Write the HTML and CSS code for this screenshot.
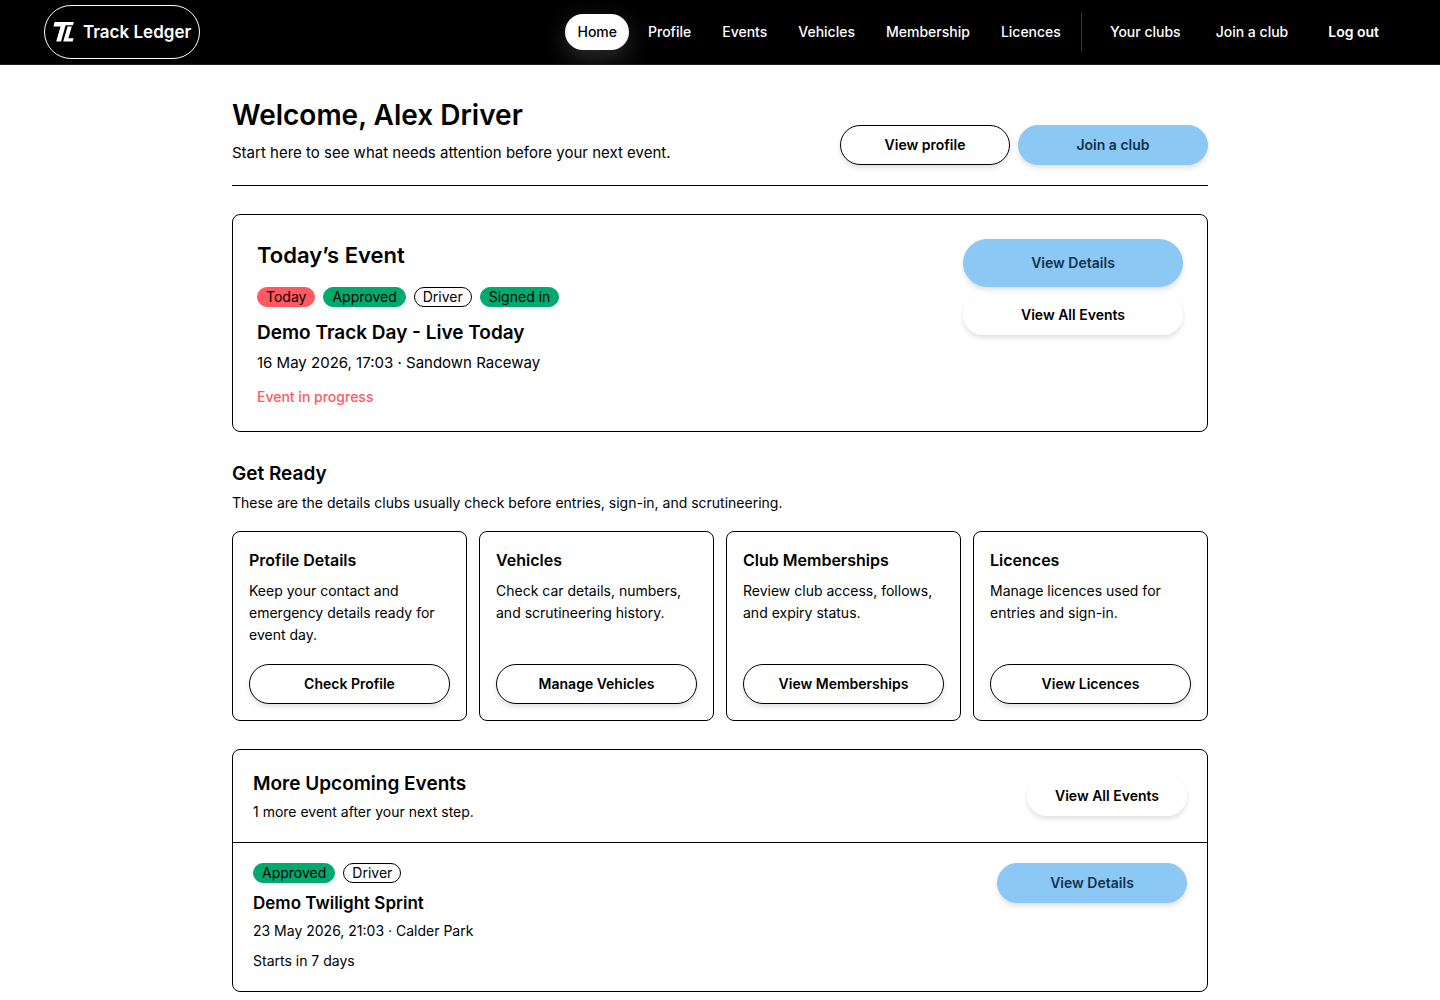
FILE: index.html
```html
<!DOCTYPE html>
<html lang="en">
<head>
<meta charset="utf-8">
<meta name="viewport" content="width=device-width, initial-scale=1">
<title>Track Ledger</title>
<link rel="stylesheet" href="styles.css">
</head>
<body>
<header class="topbar">
  <a class="brand" href="#">
    <svg class="brand-mark" viewBox="0 0 22 22" aria-hidden="true">
      <path d="M1.600 1H21l-1.200 3.200H12.600L8 20.600H3.200L7.600 5.400H.5z" fill="#fff"/>
      <path d="M14.600 5.600h4.200l-3.400 11.600h5.200l-1 3.400H10.200z" fill="#fff"/>
    </svg>
    <span>Track Ledger</span>
  </a>
  <nav class="nav" aria-label="Main">
    <div class="nav-main">
      <a class="nav-link nav-link-active" href="#" aria-current="page">Home</a>
      <a class="nav-link" href="#">Profile</a>
      <a class="nav-link" href="#">Events</a>
      <a class="nav-link" href="#">Vehicles</a>
      <a class="nav-link" href="#">Membership</a>
      <a class="nav-link" href="#">Licences</a>
    </div>
    <div class="nav-side">
      <a class="nav-link" href="#">Your clubs</a>
      <a class="nav-link" href="#">Join a club</a>
      <button class="logout" type="button">Log out</button>
    </div>
  </nav>
</header>

<main class="page">
  <section class="welcome">
    <div>
      <h1 class="welcome-title">Welcome, Alex Driver</h1>
      <p class="welcome-text">Start here to see what needs attention before your next event.</p>
    </div>
    <div class="welcome-actions">
      <a class="btn btn-outline btn-profile" href="#">View profile</a>
      <a class="btn btn-primary btn-wide" href="#">Join a club</a>
    </div>
  </section>

  <section class="card today">
    <div>
      <h2 class="today-title">Today’s Event</h2>
      <div class="badges today-badges">
        <span class="badge badge-red">Today</span>
        <span class="badge badge-green">Approved</span>
        <span class="badge">Driver</span>
        <span class="badge badge-green">Signed in</span>
      </div>
      <h3 class="today-name">Demo Track Day - Live Today</h3>
      <p class="today-meta">16 May 2026, 17:03 · Sandown Raceway</p>
      <p class="today-status">Event in progress</p>
    </div>
    <div class="today-actions">
      <a class="btn btn-primary btn-large" href="#">View Details</a>
      <a class="btn" href="#">View All Events</a>
    </div>
  </section>

  <section>
    <h2 class="section-title">Get Ready</h2>
    <p class="section-text">These are the details clubs usually check before entries, sign-in, and scrutineering.</p>
    <div class="tasks">
      <article class="card task">
        <h3 class="task-title">Profile Details</h3>
        <p class="task-text">Keep your contact and emergency details ready for event day.</p>
        <a class="btn btn-outline" href="#">Check Profile</a>
      </article>
      <article class="card task">
        <h3 class="task-title">Vehicles</h3>
        <p class="task-text">Check car details, numbers, and scrutineering history.</p>
        <a class="btn btn-outline" href="#">Manage Vehicles</a>
      </article>
      <article class="card task">
        <h3 class="task-title">Club Memberships</h3>
        <p class="task-text">Review club access, follows, and expiry status.</p>
        <a class="btn btn-outline" href="#">View Memberships</a>
      </article>
      <article class="card task">
        <h3 class="task-title">Licences</h3>
        <p class="task-text">Manage licences used for entries and sign-in.</p>
        <a class="btn btn-outline" href="#">View Licences</a>
      </article>
    </div>
  </section>

  <section class="card">
    <div class="upcoming-head">
      <div>
        <h2 class="section-title">More Upcoming Events</h2>
        <p class="upcoming-text">1 more event after your next step.</p>
      </div>
      <a class="btn btn-all" href="#">View All Events</a>
    </div>
    <article class="event">
      <div>
        <div class="badges">
          <span class="badge badge-green">Approved</span>
          <span class="badge">Driver</span>
        </div>
        <h3 class="event-name">Demo Twilight Sprint</h3>
        <p class="event-meta">23 May 2026, 21:03 · Calder Park</p>
        <p class="event-status">Starts in 7 days</p>
      </div>
      <a class="btn btn-primary btn-wide" href="#">View Details</a>
    </article>
  </section>
</main>
</body>
</html>
```
FILE: styles.css
```css
*, *::before, *::after { box-sizing: border-box; }

body {
  margin: 0;
  background: #fff;
  color: #000;
  font-family: Inter, "Liberation Sans", sans-serif;
  font-size: 14px;
  line-height: 20px;
}

h1, h2, h3, p { margin: 0; }
h1, h2, h3 { font-weight: 600; }
a { color: inherit; text-decoration: none; }

.topbar {
  display: flex;
  align-items: center;
  justify-content: space-between;
  min-height: 65px;
  padding: 0 44px;
  background: #000;
  border-bottom: 1px solid #1c1f21;
  color: #fff;
  overflow: hidden;
}

.brand {
  display: flex;
  align-items: center;
  gap: 8px;
  height: 54px;
  padding: 0 8px;
  border: 1px solid #fff;
  border-radius: 27px;
  font-size: 17px;
  font-weight: 600;
}
.brand-mark { width: 22px; height: 22px; }

.nav, .nav-main, .nav-side { display: flex; align-items: center; }
.nav { gap: 8px; }
.nav-main { gap: 7px; }
.nav-side {
  gap: 11px;
  height: 40px;
  padding-left: 16px;
  border-left: 1px solid #333;
}
.nav-link {
  padding: 8px 12px;
  border-radius: 18px;
  font-weight: 500;
}
.nav-link-active {
  background: #fff;
  color: #000;
  box-shadow: 0 8px 24px rgba(255, 255, 255, 0.18);
}
.logout {
  padding: 8px 17px;
  border: 0;
  background: none;
  color: #fff;
  font: inherit;
  font-weight: 600;
  cursor: pointer;
}

.page {
  display: flex;
  flex-direction: column;
  gap: 28px;
  max-width: 1024px;
  margin: 0 auto;
  padding: 32px 24px 8px;
}

.card { border: 1px solid #000; border-radius: 8px; }

.btn {
  display: flex;
  align-items: center;
  justify-content: center;
  min-height: 40px;
  padding: 0 16px;
  border: 1px solid transparent;
  border-radius: 24px;
  background: #fff;
  font-weight: 600;
  box-shadow: 0 3px 5px rgba(0, 0, 0, 0.12);
}
.btn-outline { border-color: #000; }
.btn-primary { background: #8cc8f4; border-color: #8cc8f4; color: #12324a; }
.btn-large { min-height: 48px; }
.btn-wide { min-width: 190px; }
.btn-profile { min-width: 170px; }
.btn-all { min-width: 160px; }

.welcome {
  display: flex;
  align-items: flex-end;
  justify-content: space-between;
  padding-bottom: 20px;
  border-bottom: 1px solid #000;
}
.welcome-title { font-size: 28px; line-height: 36px; }
.welcome-text { margin-top: 8px; font-size: 15px; line-height: 24px; }
.welcome-actions { display: flex; gap: 8px; }

.badges { display: flex; gap: 8px; }
.badge {
  height: 20px;
  padding: 0 8px;
  border: 1px solid #000;
  border-radius: 10px;
  line-height: 18px;
}
.badge-red { background: #ff5861; border-color: #ff5861; }
.badge-green { background: #00a96e; border-color: #00a96e; }

.today {
  display: flex;
  justify-content: space-between;
  padding: 24px;
}
.today-title { font-size: 22px; line-height: 32px; }
.today-badges { margin-top: 16px; }
.today-name { margin-top: 12px; font-size: 19px; line-height: 28px; }
.today-meta { margin-top: 4px; font-size: 15px; line-height: 24px; }
.today-status { margin-top: 12px; color: #ff5861; font-weight: 500; }
.today-actions {
  display: flex;
  flex-direction: column;
  gap: 8px;
  width: 220px;
}

.section-title { font-size: 19px; line-height: 28px; }
.section-text { margin-top: 4px; line-height: 22px; }

.tasks {
  display: grid;
  grid-template-columns: repeat(4, 1fr);
  gap: 12px;
  margin-top: 17px;
}
.task { display: flex; flex-direction: column; padding: 16px; }
.task-title { font-size: 16px; line-height: 24px; }
.task-text { flex: 1; margin: 8px 0 18px; line-height: 22px; }

.upcoming-head {
  display: flex;
  align-items: center;
  justify-content: space-between;
  padding: 20px;
  border-bottom: 1px solid #000;
}
.upcoming-text { margin-top: 4px; }

.event {
  display: flex;
  align-items: flex-start;
  justify-content: space-between;
  padding: 20px;
}
.event-name { margin-top: 8px; font-size: 17px; line-height: 24px; }
.event-meta { margin-top: 6px; }
.event-status { margin-top: 10px; }
```
